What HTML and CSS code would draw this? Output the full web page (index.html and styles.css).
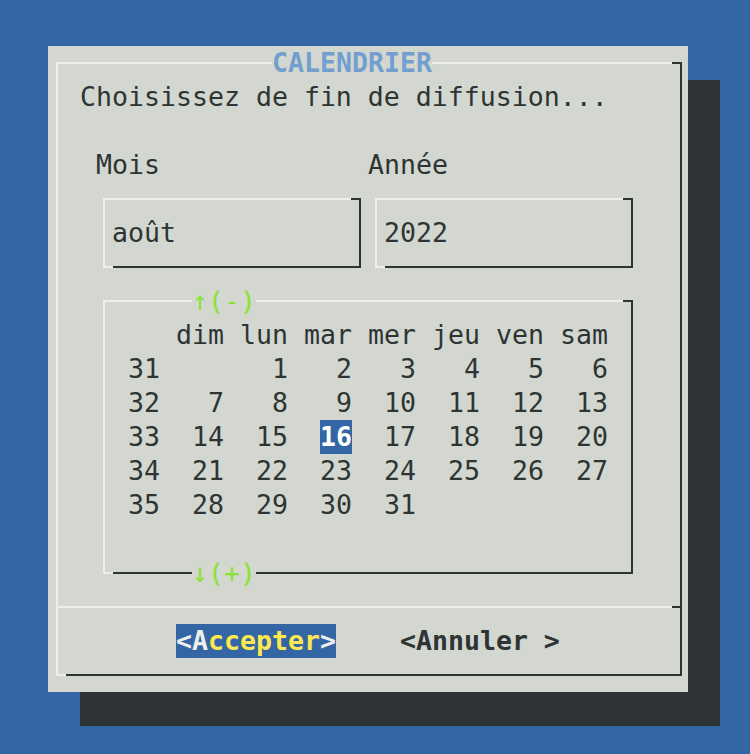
FILE: index.html
```html
<!DOCTYPE html>
<html lang="fr">
<head>
  <meta charset="UTF-8">
  <title>Calendrier</title>
  <link rel="stylesheet" href="styles.css">
</head>
<body>
  <div class="screen">
    <div class="dialog">
      <div class="box frame">
        <div class="title">CALENDRIER</div>
        <p class="prompt">Choisissez de fin de diffusion...</p>
        <div class="labels">
          <span class="label-month">Mois</span>
          <span>Année</span>
        </div>
        <div class="fields">
          <div class="box field">août</div>
          <div class="box field">2022</div>
        </div>
        <div class="box calendar">
          <div class="scroll">↑(-)</div>
          <div class="cal-grid">
            <span></span><span>dim</span><span>lun</span><span>mar</span><span>mer</span><span>jeu</span><span>ven</span><span>sam</span>
            <span>31</span><span></span><span>1</span><span>2</span><span>3</span><span>4</span><span>5</span><span>6</span>
            <span>32</span><span>7</span><span>8</span><span>9</span><span>10</span><span>11</span><span>12</span><span>13</span>
            <span>33</span><span>14</span><span>15</span><span><b class="today">16</b></span><span>17</span><span>18</span><span>19</span><span>20</span>
            <span>34</span><span>21</span><span>22</span><span>23</span><span>24</span><span>25</span><span>26</span><span>27</span>
            <span>35</span><span>28</span><span>29</span><span>30</span><span>31</span><span></span><span></span><span></span>
          </div>
          <div class="scroll scroll-down">↓(+)</div>
        </div>
        <div class="separator"></div>
        <div class="buttons">
          <span class="btn btn-active">&lt;A<span class="btn-label">ccepter</span>&gt;</span>
          <span class="btn">&lt;Annuler &gt;</span>
        </div>
      </div>
    </div>
  </div>
</body>
</html>
```

FILE: styles.css
```css
html, body {
  height: 100%;
}
body {
  margin: 0;
  background: #3465a4;
  font-family: "DejaVu Sans Mono", "Liberation Mono", monospace;
  font-size: 26.57px;
  line-height: 34px;
  color: #2e3436;
}
.screen {
  box-sizing: border-box;
  min-height: 754px;
  padding: 46px 0 0 48px;
}
.dialog {
  width: 640px;
  height: 646px;
  box-sizing: border-box;
  padding: 16px 6px 0 8px;
  background: #d3d7cf;
  box-shadow: 32px 34px 0 #2e3436;
}

/* 3d box lines: light top/left, dark right/bottom */
.box {
  position: relative;
  box-sizing: border-box;
  border: 2px solid #eeeeec;
  border-right-color: #2e3436;
  border-bottom-color: #2e3436;
}
.box::before {
  content: "";
  position: absolute;
  top: -2px;
  right: -2px;
  width: 10px;
  height: 2px;
  background: #2e3436;
}
.box::after {
  content: "";
  position: absolute;
  bottom: -2px;
  left: -2px;
  width: 10px;
  height: 2px;
  background: #eeeeec;
}

.frame {
  width: 626px;
  height: 614px;
}
.title {
  width: 160px;
  margin: -18px 0 0 214px;
  background: #d3d7cf;
  color: #729fcf;
  font-weight: bold;
}
.prompt {
  margin: 0 0 34px;
  padding-left: 22px;
}
.labels {
  display: flex;
  padding-left: 38px;
}
.label-month {
  width: 272px;
}
.fields {
  display: flex;
  gap: 14px;
  padding: 16px 0 16px 45px;
}
.field {
  width: 258px;
  height: 70px;
  padding: 16px 0 0 7px;
}
.calendar {
  width: 530px;
  height: 274px;
  margin: 16px 0 0 45px;
}
.scroll {
  width: 64px;
  margin: -18px 0 0 87px;
  background: #d3d7cf;
  color: #8ae234;
}
.scroll-down {
  margin-top: 34px;
}
.cal-grid {
  display: grid;
  grid-template-columns: 48px repeat(7, 64px);
  justify-items: end;
  padding-left: 7px;
}
.today {
  display: inline-block;
  background: #3465a4;
  color: #ffffff;
}
.separator {
  height: 2px;
  margin: 32px 0 16px;
  background: #eeeeec;
  border-right: 8px solid #2e3436;
}
.buttons {
  display: flex;
  gap: 64px;
  padding-left: 118px;
}
.btn {
  font-weight: bold;
}
.btn-active {
  background: #3465a4;
  color: #eeeeec;
}
.btn-label {
  color: #fce94f;
}
```
